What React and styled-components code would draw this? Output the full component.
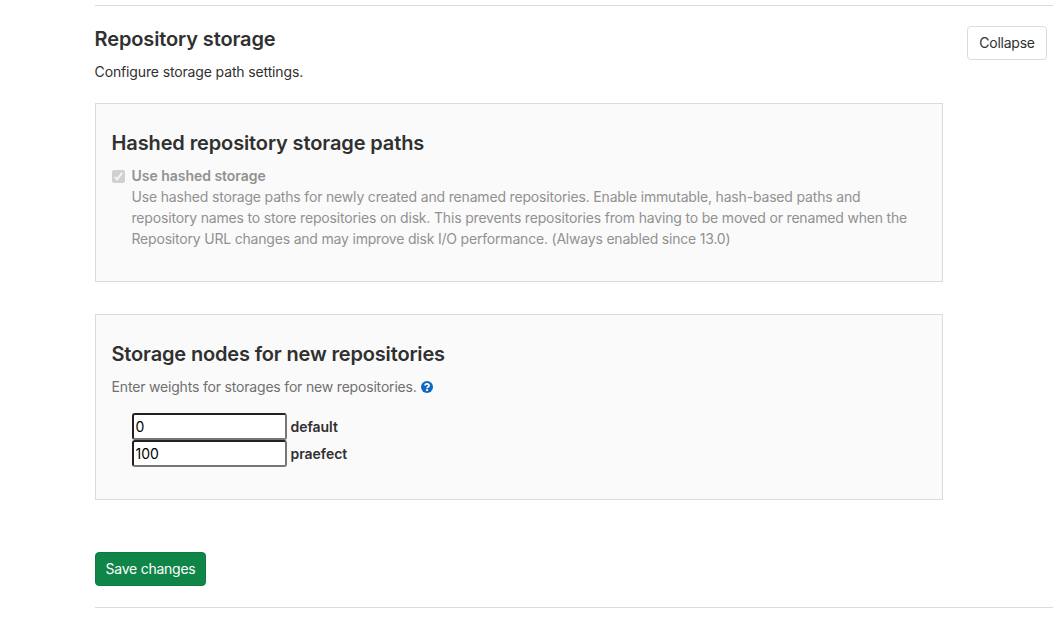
import React from "react";
import styled, { createGlobalStyle } from "styled-components";

const Global = createGlobalStyle`
  * { box-sizing: border-box; }
  body { margin: 0; background: #fff; color: #303030; font: 14px/21px Inter, "Noto Sans", sans-serif; letter-spacing: -0.175px; overflow: hidden; }
  h3, h4, p { margin: 0; }
`;
const Section = styled.section`
  margin: 5px 7px 0 95px;
  height: 603px;
  border-top: 1px solid #dbdbdb;
  border-bottom: 1px solid #dbdbdb;
  padding: 20px 6px 0 0;
`;
const Header = styled.header`
  display: flex;
  justify-content: space-between;
  align-items: flex-start;
  height: 77px;
`;
const Title = styled.h3`
  font-size: 20px;
  line-height: 26px;
  font-weight: 600;
  white-space: nowrap;
  letter-spacing: ${(p) => p.$tracking || "-0.12px"};
  text-indent: -0.5px;
`;
const Description = styled.p`
  margin-top: 9px;
  color: #303030;
  letter-spacing: -0.14px;
  text-indent: -0.4px;
`;
const Button = styled.button`
  height: 34px;
  width: ${(p) => p.$width};
  padding: 0;
  border-radius: 4px;
  border: 1px solid ${(p) => (p.$primary ? "#0e7a42" : "#dbdbdb")};
  background: ${(p) => (p.$primary ? "#108548" : "#fff")};
  color: ${(p) => (p.$primary ? "#fff" : "#303030")};
  font: 14px/20px Inter, sans-serif;
  letter-spacing: ${(p) => (p.$primary ? "-0.24px" : "-0.25px")};
`;
const Panel = styled.div`
  width: 848px;
  height: ${(p) => p.$height};
  margin-bottom: ${(p) => p.$gap};
  padding: 26px 16px 0;
  border: 1px solid #dbdbdb;
  background: #fafafa;
`;
const CheckRow = styled.label`
  display: flex;
  gap: 6.5px;
  margin-top: 9px;
  color: #919191;
`;
const CheckIcon = styled.svg`
  flex: none;
  margin-top: 5px;
`;
const CheckText = styled.div`
  white-space: nowrap;
  strong { font-weight: 600; display: block; letter-spacing: -0.03px; }
`;
const LastLine = styled.span`
  letter-spacing: -0.195px;
`;
const Hint = styled.p`
  display: flex;
  align-items: center;
  gap: 4px;
  margin-top: 9px;
  color: #707070;
  text-indent: -0.4px;
  letter-spacing: -0.185px;
`;
const Fields = styled.div`
  margin: 16px 0 0 20px;
`;
const Field = styled.label`
  display: flex;
  align-items: center;
  gap: 3.5px;
  height: 27px;
  font-weight: 600;
  letter-spacing: -0.04px;
`;
const Input = styled.input`
  width: 155px;
  height: 27px;
  padding: 1px 2px 1px 1.5px;
  border: 2px inset #767676;
  border-radius: 3px;
  background: #fff;
  color: #000;
  font: 14px/21px Inter, sans-serif;
`;

export default function App() {
  return (
    <>
      <Global />
      <Section>
        <Header>
          <div>
            <Title>Repository storage</Title>
            <Description>Configure storage path settings.</Description>
          </div>
          <Button $width="80px">Collapse</Button>
        </Header>
        <Panel $height="179px" $gap="32px">
          <Title>Hashed repository storage paths</Title>
          <CheckRow>
            <CheckIcon width="13" height="13" viewBox="0 0 13 13">
              <rect width="13" height="13" rx="2" fill="#d0d0d0" />
              <path d="M2.8 6.9 5.2 9.5 10 2.9" fill="none" stroke="#f6f6f6" strokeWidth="1.9" />
            </CheckIcon>
            <CheckText>
              <strong>Use hashed storage</strong>
              Use hashed storage paths for newly created and renamed repositories. Enable immutable, hash-based paths and<br />
              repository names to store repositories on disk. This prevents repositories from having to be moved or renamed when the<br />
              <LastLine>Repository URL changes and may improve disk I/O performance. (Always enabled since 13.0)</LastLine>
            </CheckText>
          </CheckRow>
        </Panel>
        <Panel $height="186px" $gap="52px">
          <Title $tracking="-0.16px">Storage nodes for new repositories</Title>
          <Hint>
            Enter weights for storages for new repositories.
            <svg width="12" height="12" viewBox="0 0 12 12">
              <circle cx="6" cy="6" r="6" fill="#1068bf" />
              <path d="M3.9 4.5C4.4 2.3 8.1 2.5 8 4.6 7.9 6 6.1 5.8 6.1 7.3" fill="none" stroke="#fff" strokeWidth="1.8" />
              <rect x="5.1" y="8.1" width="1.9" height="1.8" rx=".5" fill="#fff" />
            </svg>
          </Hint>
          <Fields>
            <Field><Input defaultValue="0" />default</Field>
            <Field><Input defaultValue="100" />praefect</Field>
          </Fields>
        </Panel>
        <Button $primary $width="111px">Save changes</Button>
      </Section>
    </>
  );
}
